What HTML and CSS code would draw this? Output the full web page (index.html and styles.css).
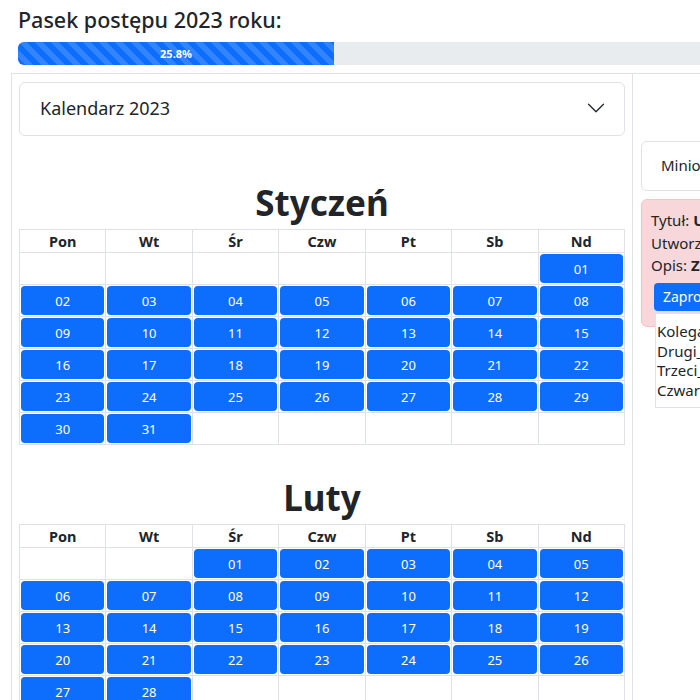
FILE: index.html
```html
<!DOCTYPE html>
<html lang="pl">
<head>
<meta charset="utf-8">
<title>Kalendarz 2023</title>
<link rel="stylesheet" href="styles.css">
</head>
<body>
<div class="page">
  <h4 class="title">Pasek postępu 2023 roku:</h4>
  <div class="progress">
    <div class="progress-bar" style="width:25.8%">25.8%</div>
  </div>

  <div class="layout">
    <div class="col-left">
      <div class="accordion">
        <button class="accordion-button" type="button">
          <span>Kalendarz 2023</span>
          <svg class="chevron" viewBox="0 0 16 16" width="20" height="20"><path fill-rule="evenodd" d="M1.646 4.646a.5.5 0 0 1 .708 0L8 10.293l5.646-5.647a.5.5 0 0 1 .708.708l-6 6a.5.5 0 0 1-.708 0l-6-6a.5.5 0 0 1 0-.708z"/></svg>
        </button>
      </div>

      <div class="months">
        <section class="month">
          <h1 class="month-name">Styczeń</h1>
          <table class="cal">
            <thead><tr><th>Pon</th><th>Wt</th><th>Śr</th><th>Czw</th><th>Pt</th><th>Sb</th><th>Nd</th></tr></thead>
            <tbody>
              <tr><td><div class="blank"></div></td><td><div class="blank"></div></td><td><div class="blank"></div></td><td><div class="blank"></div></td><td><div class="blank"></div></td><td><div class="blank"></div></td><td><button class="day">01</button></td></tr>
              <tr><td><button class="day">02</button></td><td><button class="day">03</button></td><td><button class="day">04</button></td><td><button class="day">05</button></td><td><button class="day">06</button></td><td><button class="day">07</button></td><td><button class="day">08</button></td></tr>
              <tr><td><button class="day">09</button></td><td><button class="day">10</button></td><td><button class="day">11</button></td><td><button class="day">12</button></td><td><button class="day">13</button></td><td><button class="day">14</button></td><td><button class="day">15</button></td></tr>
              <tr><td><button class="day">16</button></td><td><button class="day">17</button></td><td><button class="day">18</button></td><td><button class="day">19</button></td><td><button class="day">20</button></td><td><button class="day">21</button></td><td><button class="day">22</button></td></tr>
              <tr><td><button class="day">23</button></td><td><button class="day">24</button></td><td><button class="day">25</button></td><td><button class="day">26</button></td><td><button class="day">27</button></td><td><button class="day">28</button></td><td><button class="day">29</button></td></tr>
              <tr><td><button class="day">30</button></td><td><button class="day">31</button></td><td><div class="blank"></div></td><td><div class="blank"></div></td><td><div class="blank"></div></td><td><div class="blank"></div></td><td><div class="blank"></div></td></tr>
            </tbody>
          </table>
        </section>

        <section class="month">
          <h1 class="month-name">Luty</h1>
          <table class="cal">
            <thead><tr><th>Pon</th><th>Wt</th><th>Śr</th><th>Czw</th><th>Pt</th><th>Sb</th><th>Nd</th></tr></thead>
            <tbody>
              <tr><td><div class="blank"></div></td><td><div class="blank"></div></td><td><button class="day">01</button></td><td><button class="day">02</button></td><td><button class="day">03</button></td><td><button class="day">04</button></td><td><button class="day">05</button></td></tr>
              <tr><td><button class="day">06</button></td><td><button class="day">07</button></td><td><button class="day">08</button></td><td><button class="day">09</button></td><td><button class="day">10</button></td><td><button class="day">11</button></td><td><button class="day">12</button></td></tr>
              <tr><td><button class="day">13</button></td><td><button class="day">14</button></td><td><button class="day">15</button></td><td><button class="day">16</button></td><td><button class="day">17</button></td><td><button class="day">18</button></td><td><button class="day">19</button></td></tr>
              <tr><td><button class="day">20</button></td><td><button class="day">21</button></td><td><button class="day">22</button></td><td><button class="day">23</button></td><td><button class="day">24</button></td><td><button class="day">25</button></td><td><button class="day">26</button></td></tr>
              <tr><td><button class="day">27</button></td><td><button class="day">28</button></td><td><div class="blank"></div></td><td><div class="blank"></div></td><td><div class="blank"></div></td><td><div class="blank"></div></td><td><div class="blank"></div></td></tr>
            </tbody>
          </table>
        </section>
      </div>
    </div>

    <div class="col-right">
      <div class="card">Minione wydarzenia</div>
      <div class="alert">
        <div class="line">Tytuł: <b>Urodziny</b></div>
        <div class="line">Utworzył: admin</div>
        <div class="line">Opis: <b>Zabawa w ogrodzie</b></div>
        <button class="btn-invite" type="button">Zaproś znajomych</button>
        <ul class="invite-list">
          <li>Kolega_1</li>
          <li>Drugi_kolega</li>
          <li>Trzeci_kolega</li>
          <li>Czwarty_kolega</li>
        </ul>
      </div>
    </div>
  </div>
</div>
</body>
</html>
```

FILE: styles.css
```css
html, body {
  margin: 0;
  padding: 0;
  overflow: hidden;
  background: #fff;
}

body {
  font-family: "Noto Sans", "Open Sans", sans-serif;
  color: #212529;
  font-size: 16px;
}

.page {
  width: 1260px;
  padding-left: 11px;
}

.title {
  margin: 7px 0 9px 7px;
  font-size: 21.5px;
  font-weight: 500;
  line-height: 26px;
}

.progress {
  margin-left: 7px;
  width: 1225px;
  height: 23px;
  background: #e9ecef;
  border-radius: 6px;
  overflow: hidden;
  display: flex;
}

.progress-bar {
  height: 100%;
  background-color: #0d6efd;
  background-image: linear-gradient(45deg,
    rgba(255,255,255,.15) 25%, transparent 25%,
    transparent 50%, rgba(255,255,255,.15) 50%,
    rgba(255,255,255,.15) 75%, transparent 75%, transparent);
  background-size: 16px 16px;
  color: #fff;
  font-size: 11px;
  font-weight: 700;
  display: flex;
  align-items: center;
  justify-content: center;
}

.layout {
  margin-top: 8px;
  display: flex;
  border-top: 1px solid #dee2e6;
  border-left: 1px solid #dee2e6;
}

.col-left {
  width: 606px;
  padding: 8px 7px 0;
  border-right: 1px solid #dee2e6;
  flex: none;
}

.accordion {
  border: 1px solid #dee2e6;
  border-radius: 6px;
}

.accordion-button {
  display: flex;
  align-items: center;
  justify-content: space-between;
  width: 100%;
  padding: 13px 18px 15px 20px;
  border: 0;
  background: transparent;
  font-family: inherit;
  font-size: 18px;
  line-height: 24px;
  color: #212529;
  text-align: left;
}

.chevron {
  fill: #212529;
  flex: none;
}

.months {
  padding-top: 15px;
}

.month {
  margin-top: 31px;
}

.month + .month {
  margin-top: 32px;
}

.month-name {
  margin: 0 0 5px;
  text-align: center;
  font-size: 35px;
  font-weight: 700;
  line-height: 42px;
}

.cal {
  width: 100%;
  border-collapse: collapse;
  table-layout: fixed;
}

.cal th {
  border: 1px solid #dee2e6;
  padding: 0;
  font-size: 14.5px;
  font-weight: 700;
  line-height: 22px;
  text-align: center;
}

.cal td {
  border: 1px solid #dee2e6;
  padding: 1px;
}

.day {
  display: block;
  width: 100%;
  height: 29px;
  border: 0;
  border-radius: 4px;
  background: #0d6efd;
  color: #fff;
  font-family: inherit;
  font-size: 13px;
  padding: 0;
}

.blank {
  height: 29px;
}

.col-right {
  flex: 1;
  padding: 67px 7px 0 8px;
}

.card {
  width: 400px;
  border: 1px solid #dee2e6;
  border-radius: 6px;
  padding: 12px 19px 14px;
  font-size: 15px;
  line-height: 22px;
}

.alert {
  position: relative;
  width: 400px;
  margin-top: 8px;
  background: #f8d7da;
  border: 1px solid #f5c2c7;
  border-radius: 6px;
  padding: 9px 9px 15px;
  font-size: 15px;
  line-height: 22.5px;
  color: #212529;
}

.btn-invite {
  display: block;
  margin: 6px 0 0 3px;
  height: 28px;
  padding: 0 9px;
  border: 0;
  border-radius: 4px;
  background: #0d6efd;
  color: #fff;
  font-family: inherit;
  font-size: 14px;
}

.invite-list {
  position: absolute;
  left: 13px;
  top: 113px;
  margin: 0;
  padding: 8px 0 6px 1px;
  width: 140px;
  list-style: none;
  background: #fff;
  border: 1px solid #dee2e6;
  font-size: 15px;
  line-height: 19.7px;
}
```
